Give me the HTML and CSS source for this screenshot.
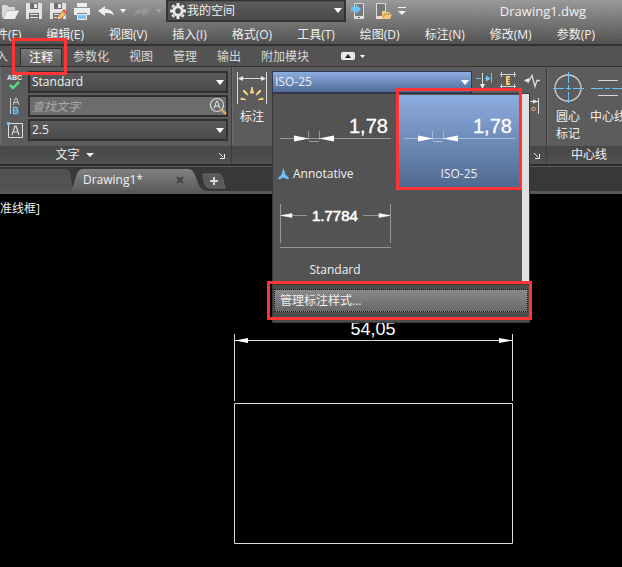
FILE: index.html
```html
<!DOCTYPE html>
<html lang="zh-CN">
<head>
  <meta charset="UTF-8">
  <meta name="viewport" content="width=device-width, initial-scale=1.0">
  <title>Drawing1.dwg</title>
  <link rel="stylesheet" href="styles.css">
</head>
<body>
  <div class="app">
    <header class="header">
      <div class="quick-bar">
        <div class="quick-tools">
          <button class="icon-btn" aria-label="打开"><svg width="18" height="18"><path d="M1 15V3h5l2 2h6v3H6L2 16z" fill="#d8d8d8"/><path d="M6 8.500h12L14 17H2z" fill="#ededed"/></svg></button>
          <button class="icon-btn" aria-label="保存"><svg width="18" height="18"><path d="M1 1h16v16H1z" fill="#e2e2e2"/><path d="M5 1h8v6H5zM4 11h10v6H4z" fill="#6d6d6d"/><path d="M9 2h3v4H9zM5 12h8v1H5zM5 15h8v1H5z" fill="#e8e8e8"/></svg></button>
          <button class="icon-btn" aria-label="另存为"><svg width="18" height="18"><path d="M1 1h16v16H1z" fill="#e2e2e2"/><path d="M5 1h8v6H5zM4 11h10v6H4z" fill="#6d6d6d"/><path d="M9 2h3v4H9zM5 12h5v1H5zM5 15h4v1H5z" fill="#e8e8e8"/><path d="M8 18l1-4 6-6 3 3-6 6z" fill="#f4bd62" stroke="#6a5a4a" stroke-width=".6"/><path d="M13 9l2-2 3 3-2 2z" fill="#e8604f"/></svg></button>
          <button class="icon-btn" aria-label="打印"><svg width="18" height="18"><path d="M4 1h10v4H4zM1 6h16v7h-3v-2H4v2H1z" fill="#ececec"/><path d="M4.500 12.500h9v5h-9z" fill="#7cc4f8" stroke="#eee"/></svg></button>
          <button class="icon-btn" aria-label="放弃"><svg width="18" height="18"><path d="M1 9l7-5v3c5 0 8 2 9 7-2-3-5-3-9-3v3z" fill="#f0f0f0"/></svg></button>
          <svg class="caret" width="6" height="4"><path d="M0 0h6L3 4z"/></svg>
          <button class="icon-btn" aria-label="重做"><svg width="18" height="18"><path d="M17 9l-7-5v3c-5 0-8 2-9 7 2-3 5-3 9-3v3z" fill="#979797"/></svg></button>
          <svg class="caret dim" width="6" height="4"><path d="M0 0h6L3 4z"/></svg>
        </div>
        <div class="workspace">
          <svg width="16" height="16" viewBox="-8 -8 16 16"><circle r="4.200" fill="none" stroke="#e6e6e6" stroke-width="3"/><path d="M0-8V-5M0 8V5M-8 0H-5M8 0H5M-5.600-5.600L-4-4M5.600 5.600L4 4M-5.600 5.600L-4 4M5.600-5.600L4-4" stroke="#e6e6e6" stroke-width="3"/></svg>
          <select aria-label="工作空间"><option>我的空间</option></select>
        </div>
        <div class="phone-tools">
          <button class="icon-btn" aria-label="打开移动"><svg width="18" height="18"><path d="M4.500 1.500h9v15h-9z" fill="#777" stroke="#ddd"/><path d="M4 14h10v3H4z" fill="#ddd"/><path d="M8 15h2v1H8z" fill="#555"/><path d="M1 5h5V2l5 5-5 5V9H1z" fill="#6bc2fa"/></svg></button>
          <button class="icon-btn" aria-label="保存移动"><svg width="18" height="18"><path d="M2.500 1.500h9v15h-9z" fill="#777" stroke="#ddd"/><path d="M2 14h10v3H2z" fill="#ddd"/><path d="M8 17V9h3l1 1h4v2h2l-2 5z" fill="#f5c876"/><path d="M9 15l2-3h6" fill="none" stroke="#8a744d" stroke-width=".7"/></svg></button>
          <button class="icon-btn" aria-label="自定义"><svg width="18" height="18"><path d="M0 5h8v1H0zM0 9h8l-4 4z" fill="#f2f2f2"/></svg></button>
        </div>
        <div class="doc-title">Drawing1.dwg</div>
      </div>
      <nav class="menu-bar">
        <a href="#">件(F)</a>
        <a href="#">编辑(E)</a>
        <a href="#">视图(V)</a>
        <a href="#">插入(I)</a>
        <a href="#">格式(O)</a>
        <a href="#">工具(T)</a>
        <a href="#">绘图(D)</a>
        <a href="#">标注(N)</a>
        <a href="#">修改(M)</a>
        <a href="#">参数(P)</a>
      </nav>
    </header>

    <nav class="ribbon-tabs">
      <a href="#">入</a>
      <a href="#" class="active">注释<span class="mark mark-tab"></span></a>
      <a href="#">参数化</a>
      <a href="#">视图</a>
      <a href="#">管理</a>
      <a href="#">输出</a>
      <a href="#">附加模块</a>
      <button class="ribbon-toggle" aria-label="最小化"><svg width="24" height="10"><rect x=".5" y="1.500" width="13" height="7" rx="1" fill="#e4e6ee" stroke="#f4f4f4"/><path d="M4 7h6L7 3z" fill="#222"/><path d="M19 4h5l-2.500 3z" fill="#fff"/></svg></button>
    </nav>

    <section class="ribbon">
      <div class="panel panel-text">
        <div class="panel-body">
          <div class="field-row">
            <label for="text-style" aria-label="文字样式"><svg width="16" height="18"><text x="0" y="7" class="abc">ABC</text><path d="M3 12l3 3 6-6" fill="none" stroke="#5ed688" stroke-width="2.500"/></svg></label>
            <select id="text-style"><option>Standard</option></select>
          </div>
          <div class="field-row find">
            <label for="find-text" aria-label="查找文字"><svg width="16" height="18"><path d="M3.500 1v16" stroke="#ccc"/><path d="M6 8l2.500-7h1L12 8M7 5.500h4" fill="none" stroke="#d0d0d0"/><path d="M6.500 10.500H9a1.500 1.500 0 010 3H6.500zM6.500 13.500h3a1.500 1.500 0 010 3h-3z" fill="none" stroke="#6bc2fa" stroke-width="1.300"/></svg></label>
            <input id="find-text" type="text" placeholder="查找文字">
            <svg class="find-icon" width="18" height="18"><circle cx="8" cy="8" r="6.500" fill="none" stroke="#d8d8d8" stroke-width="1.200"/><path d="M5 11.500L7.500 4h1l2.500 7.500M6 9h4" fill="none" stroke="#e8e8e8"/><path d="M13 13l4 4" stroke="#d9a765" stroke-width="2.500"/></svg>
          </div>
          <div class="field-row">
            <label for="text-height" aria-label="文字高度"><svg width="16" height="18"><path d="M1.500 2.500h14v14h-14z" fill="none" stroke="#ddd"/><path d="M5 14l3-9h1l3 9M6 11h5" fill="none" stroke="#ddd" stroke-width="1.200"/><path d="M0 1h3v3H0z" fill="#6bc2fa"/></svg></label>
            <select id="text-height"><option>2.5</option></select>
          </div>
        </div>
        <div class="panel-title">
          <span>文字</span>
          <svg class="caret" width="8" height="4"><path d="M0 0h8L4 4z"/></svg>
          <svg class="launcher" width="6" height="6"><path d="M0 0l4 4M5.500 1v4.500H1" /></svg>
        </div>
      </div>

      <div class="panel panel-dim">
        <div class="panel-body">
          <button class="big-btn dim-btn">
            <svg width="32" height="34"><path d="M1.500 1v32M30.500 1v32M3 7.500h26" stroke="#d8d8d8"/><path d="M2 7.500l5-2.500v5zM30 7.500L25 5v5z" fill="#ececec"/><path d="M14.500 22l1.500-6 1.500 6zM7 20l1-1 4 4.500-1 .5zM25 20l-1-1-4 4.500 1 .5zM5 28.500v-1.500l5 1.500zM27 28.500v-1.500l-5 1.500z" fill="#fcd27c" stroke="#fcd27c"/></svg>
            <span>标注</span>
          </button>
          <div class="dim-tools">
            <div class="dim-row">
              <div class="dim-combo">
                <select aria-label="标注样式"><option>ISO-25</option></select>
                <div class="gallery">
                  <div class="gallery-list">
                    <div class="style-item">
                      <svg width="120" height="71"><path d="M5 43.500h111M33.500 36v9M44.500 36v9M34 46.500h10" class="line"/><path d="M19 40.500l15 3L19 46.500zM59 40.500l-15 3L59 46.500z" fill="#fff"/><text x="74" y="38" class="num">1,78</text></svg>
                      <span class="style-name"><svg width="11" height="12"><path d="M5.500 0L7.500 6.500l3.500 3.500-1 1.500-4.500-2-4.500 2L0 10l3.500-3.500z" fill="#6dc1f7"/></svg>Annotative</span>
                    </div>
                    <div class="style-item selected">
                      <svg width="120" height="71"><path d="M5 43.500h111M33.500 36v9M44.500 36v9M34 46.500h10" class="line"/><path d="M19 40.500l15 3L19 46.500zM59 40.500l-15 3L59 46.500z" fill="#fff"/><text x="74" y="38" class="num">1,78</text></svg>
                      <span class="style-name">ISO-25</span>
                      <span class="mark mark-style"></span>
                    </div>
                    <div class="style-item">
                      <svg width="120" height="71"><path d="M5.500 13v39M115.500 13v39M5 56.500h111M6 24.500h26M88 24.500h27" class="line"/><path d="M6 24.500l11-2v4zM115 24.500l-11-2v4z" fill="#fff" stroke="#fff" stroke-width=".5"/><text x="37" y="30" class="num small">1.7784</text></svg>
                      <span class="style-name">Standard</span>
                    </div>
                  </div>
                  <div class="gallery-footer">
                    <button class="manage-btn">管理标注样式...</button>
                    <span class="mark mark-manage"></span>
                  </div>
                </div>
              </div>
              <button class="icon-btn" aria-label="打断"><svg width="16" height="18"><path d="M0 6.500h5M9 6.500h5M15.500 1v10" stroke="#6bc2fa"/><path d="M10 3.500l5 3-5 3z" fill="#6bc2fa"/><path d="M6.500 1v13" stroke="#ddd"/><path d="M4 12h5l-2.500 5z" fill="#eee"/></svg></button>
              <button class="icon-btn" aria-label="调整间距"><svg width="16" height="18"><path d="M0 2.500h16M0 14.500h16M1.500 0v5M14.500 0v5M1.500 12v5M14.500 12v5" stroke="#d8d8d8"/><path d="M6 4h4v9H6z" fill="#f4c86d"/><path d="M8 6.500h2M8 8.500h2M8 10.500h2" stroke="#705c35"/></svg></button>
              <button class="icon-btn" aria-label="折弯"><svg width="16" height="18"><path d="M1 8.500h4l3-5 3 11 2-6h3" fill="none" stroke="#ddd" stroke-width="1.300"/><path d="M0 8.500L5 6v5z" fill="#e8e8e8"/></svg></button>
            </div>
            <button class="icon-btn" aria-label="检验"><svg width="16" height="18"><path d="M5 4.500h9M14.500 1v16" stroke="#ddd"/><path d="M9 2.500l5 2-5 2z" fill="#eee"/><rect x="7.500" y="10.500" width="4" height="3" rx="1.500" fill="none" stroke="#f0a070"/></svg></button>
          </div>
        </div>
        <div class="panel-title"><svg class="launcher" width="6" height="6"><path d="M0 0l4 4M5.500 1v4.500H1"/></svg></div>
      </div>

      <div class="panel panel-center">
        <div class="panel-body">
          <button class="big-btn">
            <svg width="32" height="34"><circle cx="16" cy="17" r="13" fill="none" stroke="#cfcfcf" stroke-width="1.300"/><path d="M16.500 1v11M16.500 14v5M16.500 21v11M1 17.500h11M14 17.500h5M21 17.500h11" stroke="#6bc2fa"/></svg>
            <span>圆心<br>标记</span>
          </button>
          <button class="big-btn">
            <svg width="36" height="34"><path d="M8 9.500h20M8 24.500h20" stroke="#d8d8d8"/><path d="M1 17.500h12M15 17.500h5M22 17.500h12" stroke="#6bc2fa"/></svg>
            <span>中心线</span>
          </button>
        </div>
        <div class="panel-title"><span>中心线</span></div>
      </div>
    </section>

    <nav class="file-tabs">
      <a href="#" class="file-tab prev" aria-label="开始"><svg width="76" height="22"><path d="M0 0h64c6 0 7 4 7 9l2 13H0z" fill="#525252"/></svg></a>
      <a href="#" class="file-tab current">
        <svg width="136" height="22"><path d="M0 22C6 18 4 0 13 0h105c10 0 7 20 18 22z" fill="url(#tab-fill)"/><defs><linearGradient id="tab-fill" x2="0" y2="1"><stop stop-color="#818181"/><stop offset="1" stop-color="#5c5c5c"/></linearGradient></defs></svg>
        <span>Drawing1*</span>
        <span class="close"><svg width="8" height="8"><path d="M1 1l6 6M7 1L1 7" stroke="#454545" stroke-width="2"/></svg></span>
      </a>
      <button class="new-tab" aria-label="新建"><svg width="24" height="16"><path d="M1 1h15c5 0 5 8 7 14H8C3 15 2 9 1 1z" fill="#595959" stroke="#6a6a6a"/><path d="M8 8h8M12 4v8" stroke="#d8d8d8" stroke-width="2"/></svg></button>
    </nav>

    <main class="canvas">
      <div class="view-label">准线框]</div>
      <svg class="drawing" width="280" height="230">
        <text x="139" y="21" text-anchor="middle">54,05</text>
        <path d="M.500 20v67M278.500 20v67M1 26.500h277M.500 89.500h278v140h-278z" fill="none" stroke="#dcdcdc"/>
        <path d="M1 26.500l13-2.500v5zM278 26.500l-13-2.500v5z" fill="#fff"/>
      </svg>
    </main>
  </div>
</body>
</html>
```
FILE: styles.css
```css
* { box-sizing: border-box; }
body { margin: 0; background: #000; color: #f0f0f0; font-family: "Open Sans", "Noto Sans CJK SC", sans-serif; font-size: 12px; line-height: 16px; overflow: hidden; }
a { color: inherit; text-decoration: none; white-space: nowrap; }
svg { display: block; flex: none; overflow: visible; }
button { font: inherit; color: inherit; background: none; border: none; padding: 0; cursor: pointer; }
select, input { font: inherit; color: inherit; width: 100%; height: 22px; padding: 0 2px; border: 2px solid #303030; border-radius: 0; outline: none; }
select { appearance: none; background: url("data:image/svg+xml,%3Csvg xmlns='http://www.w3.org/2000/svg' width='8' height='5'%3E%3Cpath d='M0 0h8L4 5z' fill='white'/%3E%3C/svg%3E") no-repeat right 2px center, linear-gradient(#5b5b5b, #4a4a4a); }
.app { display: flex; flex-direction: column; min-height: 100vh; }
.icon-btn { flex: none; }
.caret { fill: #f2f2f2; }
.caret.dim { fill: #a4a4a4; }
.mark { position: absolute; border: 3px solid #ff3434; z-index: 5; pointer-events: none; }

/* title and menu */
.header { border-bottom: 2px solid #303030; background: repeating-linear-gradient(135deg, rgba(255,255,255,.03) 0 1px, transparent 1px 3px), linear-gradient(#989898, #505050); }
.quick-bar { display: flex; align-items: center; height: 22px; }
.quick-tools { display: flex; align-items: center; gap: 6px; width: 166px; padding-left: 1px; flex: none; }
.quick-tools .caret { margin: 0 1px 0 -1px; }
.workspace { display: flex; align-items: center; width: 180px; height: 22px; padding-left: 2px; background: #4e4e4e; border: 2px solid #333; border-top-width: 1px; flex: none; }
.workspace select { border: none; height: 18px; padding-left: 1px; background-color: transparent; }
.phone-tools { display: flex; gap: 6px; margin-left: 4px; flex: none; }
.doc-title { flex: 1; text-align: center; font-size: 13px; padding-left: 64px; padding-right: 16px; }
.menu-bar { display: flex; gap: 25px; height: 22px; margin-left: -4px; line-height: 25px; }

/* ribbon tabs */
.ribbon-tabs { display: flex; align-items: flex-end; gap: 20px; height: 21px; background: #535353; border-bottom: 1px solid #333; line-height: 19px; margin-left: -4px; color: #d8d8d8; }
.ribbon-tabs .active { position: relative; margin: 0 -9px 0 -8px; padding: 0 8px; background: linear-gradient(#777, #5f5f5f); border: 1px solid #2e2e2e; border-bottom: none; color: #fff; height: 18px; line-height: 17px; }
.mark-tab { top: -11px; right: -6px; bottom: -9px; left: -9px; }
.ribbon-toggle { margin: 0 0 5px 12px; }

/* ribbon panels */
.ribbon { display: flex; background: #5c5c5c; border-bottom: 2px solid #2c2c2c; }
.panel { flex: none; border-right: 1px solid #3e3e3e; box-shadow: inset 1px 0 #6a6a6a; }
.panel-text { width: 232px; }
.panel-dim { width: 315px; }
.panel-center { flex: 1; min-width: 84px; border-right: none; margin-right: -8px; }
.panel-body { height: 79px; padding-top: 4px; }
.panel-title { display: flex; align-items: center; justify-content: center; gap: 6px; height: 18px; background: linear-gradient(#474747, #505050); position: relative; }
.panel-text .panel-title { padding-right: 82px; }
.launcher { position: absolute; right: 6px; bottom: 5px; fill: none; stroke: #eee; }
.field-row { display: flex; align-items: center; margin: 0 3px 2px 7px; position: relative; }
.field-row label { width: 21px; flex: none; }
.find input { background: #6c6c6c; padding-right: 24px; }
.find input::placeholder { color: #aaa; font-style: italic; opacity: 1; }
.find-icon { position: absolute; right: 1px; top: 2px; }
.abc { font: bold 7px "Liberation Sans", sans-serif; fill: #e8e8e8; }
.big-btn { display: flex; flex-direction: column; align-items: center; gap: 3px; line-height: 17px; white-space: nowrap; flex: none; }
.panel-dim .panel-body { display: flex; gap: 4px; padding-left: 4px; }
.panel-center .panel-body { display: flex; gap: 6px; padding-left: 5px; }
.dim-tools { display: flex; flex-direction: column; gap: 6px; width: 268px; }
.dim-tools > .icon-btn { align-self: flex-end; }
.dim-row { display: flex; gap: 8px; height: 20px; }
.dim-combo { position: relative; width: 200px; margin-right: -4px; flex: none; }
.dim-combo select { border-color: #2e3858; border-width: 1px; background-color: #5675a8; background-image: url("data:image/svg+xml,%3Csvg xmlns='http://www.w3.org/2000/svg' width='8' height='5'%3E%3Cpath d='M0 0h8L4 5z' fill='white'/%3E%3C/svg%3E"), linear-gradient(#8dade0, #4f6a98); }

/* style gallery */
.gallery { position: absolute; top: 22px; left: 0; width: 258px; background: #535353; border: 1px solid #383838; z-index: 3; }
.gallery-list { display: grid; grid-template-columns: 120px 120px; gap: 4px; padding: 1px 0 0 2px; border-right: 7px solid #e0e0e0; }
.style-item { position: relative; height: 92px; text-align: center; }
.style-item.selected { background: linear-gradient(#8dade0, #4f6a90); }
.style-name { display: inline-flex; align-items: center; gap: 4px; }
.style-item:first-child { text-align: left; padding-left: 3px; }
.style-item:first-child > svg { margin-left: -3px; }
.line { fill: none; stroke: #989898; }
.selected .line { stroke: #a9b8d2; }
.num { font: 20px "Liberation Sans", sans-serif; fill: #fff; stroke: #fff; stroke-width: .3px; }
.num.small { font-size: 15px; stroke-width: .6px; }
.mark-style { top: -7px; right: -3px; bottom: -3px; left: -3px; }
.gallery-footer { position: relative; padding: 4px 1px 10px; border-top: 2px solid #3b3b3b; background: #4c4c4c; }
.manage-btn { display: block; width: 100%; height: 23px; padding-left: 5px; text-align: left; background: linear-gradient(#8a8a8a, #686868); border: 1px dotted #111; }
.mark-manage { top: -4px; right: -3px; bottom: 2px; left: -6px; }

/* file tabs */
.file-tabs { display: flex; align-items: flex-end; height: 28px; padding-bottom: 3px; background: linear-gradient(#5c5c5c 0 1px, #383838 1px 25px, #585858 25px); }
.file-tab { position: relative; height: 22px; }
.prev { width: 70px; }
.current { display: flex; align-items: center; width: 132px; padding: 0 18px 0 13px; justify-content: space-between; }
.current > svg { position: absolute; left: 0; top: 0; }
.current span { position: relative; }
.new-tab { margin-bottom: 2px; }

/* drawing area */
.canvas { flex: 1; padding-top: 5px; background: #000; }
.view-label { height: 20px; line-height: 20px; }
.drawing { margin: 95px 0 0 234px; }
.drawing text { font: 18px "Liberation Sans", sans-serif; fill: #fff; }
```
